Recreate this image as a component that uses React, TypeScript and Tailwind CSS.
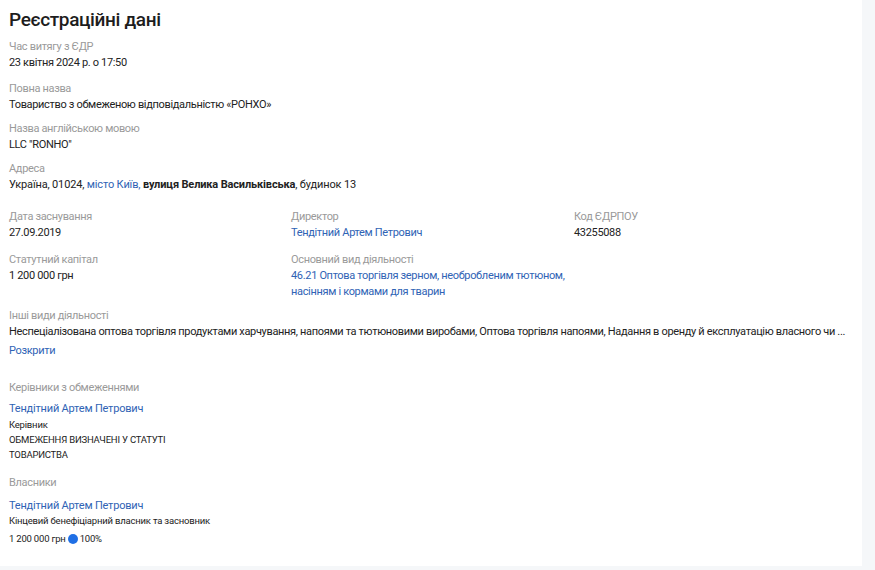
const label = "text-[#9a9a9a] text-[11px] leading-[16px] tracking-[-0.33px]";
const value = "text-[#222] text-[11px] leading-[16px] tracking-[-0.33px]";
const link = "text-[#2f63b5] text-[11px] leading-[16px] tracking-[-0.33px]";
const small = "text-[#222] text-[9.5px] tracking-[-0.2px]";

function Field({ title, children, className = "" }: { title: string; children: React.ReactNode; className?: string }) {
  return (
    <div className={className}>
      <div className={label}>{title}</div>
      {children}
    </div>
  );
}

export default function App() {
  return (
    <div className="w-[875px] h-[570px] bg-[#f5f7f9] overflow-hidden" style={{ fontFamily: 'Roboto, "Noto Sans", sans-serif' }}>
      <div className="w-[862px] h-[566px] bg-white pl-[9px] pt-[9px]">
        <h1 className="text-[19px] leading-[22px] font-medium tracking-[-0.35px] text-[#1d1d1d] mb-[8px]">Реєстраційні дані</h1>

        <Field title="Час витягу з ЄДР" className="mb-[10px]">
          <div className={value}>23 квітня 2024 р. о 17:50</div>
        </Field>
        <Field title="Повна назва" className="mb-[8px]">
          <div className={value}>Товариство з обмеженою відповідальністю «РОНХО»</div>
        </Field>
        <Field title="Назва англійською мовою" className="mb-[8px]">
          <div className={value}>LLC "RONHO"</div>
        </Field>
        <Field title="Адреса" className="mb-[16px]">
          <div className="text-[#222] text-[11px] leading-[16px] tracking-[-0.15px]">
            Україна, 01024, <span className="text-[#2f63b5]">місто Київ,</span> <b className="font-bold">вулиця Велика Васильківська</b>, будинок 13
          </div>
        </Field>

        <div className="grid grid-cols-[282px_283px_1fr] gap-y-[11px] mb-[8px]">
          <Field title="Дата заснування">
            <div className={value}>27.09.2019</div>
          </Field>
          <Field title="Директор">
            <div className={link}>Тендітний Артем Петрович</div>
          </Field>
          <Field title="Код ЄДРПОУ">
            <div className={value}>43255088</div>
          </Field>
          <Field title="Статутний капітал">
            <div className={value}>1 200 000 грн</div>
          </Field>
          <Field title="Основний вид діяльності">
            <div className={`${link} w-[282px]`}>46.21 Оптова торгівля зерном, необробленим тютюном, насінням і кормами для тварин</div>
          </Field>
        </div>

        <Field title="Інші види діяльності" className="mb-[21px]">
          <div className={`${value} w-[848px] truncate`}>
            Неспеціалізована оптова торгівля продуктами харчування, напоями та тютюновими виробами, Оптова торгівля напоями, Надання в оренду й експлуатацію власного чи ...
          </div>
          <div className={`${link} mt-[3px]`}>Розкрити</div>
        </Field>

        <div className="mb-[13px]">
          <div className={`${label} mb-[5px]`}>Керівники з обмеженнями</div>
          <div className="text-[#2f63b5] text-[11px] leading-[16px] tracking-[-0.2px]">Тендітний Артем Петрович</div>
          <div className={`${small} leading-[14px] mt-[1px]`}>Керівник</div>
          <div className={`${small} leading-[15px] w-[165px]`}>ОБМЕЖЕННЯ ВИЗНАЧЕНІ У СТАТУТІ ТОВАРИСТВА</div>
        </div>

        <div>
          <div className={`${label} mb-[7px]`}>Власники</div>
          <div className="text-[#2f63b5] text-[11px] leading-[16px] tracking-[-0.2px]">Тендітний Артем Петрович</div>
          <div className={`${small} leading-[14px]`}>Кінцевий бенефіціарний власник та засновник</div>
          <div className={`${small} flex items-center leading-[15px] mt-[3px]`}>
            <span>1 200 000 грн</span>
            <span className="inline-block w-[10px] h-[10px] rounded-full bg-[#1f6fe5] mx-[2px]" />
            <span>100%</span>
          </div>
        </div>
      </div>
    </div>
  );
}
